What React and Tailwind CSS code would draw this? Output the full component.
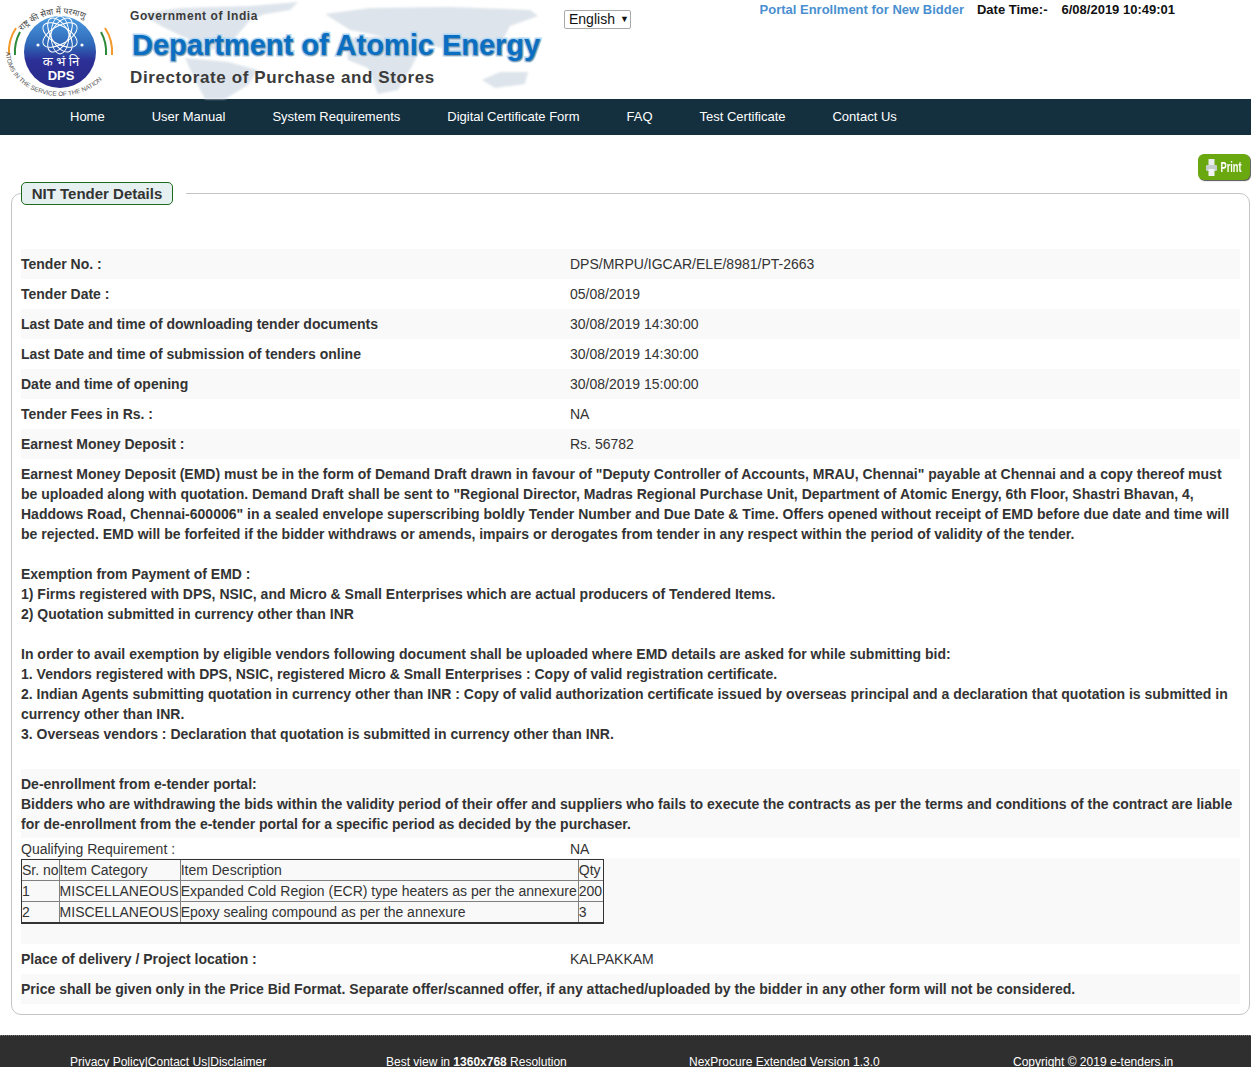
import React from 'react';

const NAV = ['Home', 'User Manual', 'System Requirements', 'Digital Certificate Form', 'FAQ', 'Test Certificate', 'Contact Us'];

const DETAILS = [
  ['Tender No. :', 'DPS/MRPU/IGCAR/ELE/8981/PT-2663'],
  ['Tender Date :', '05/08/2019'],
  ['Last Date and time of downloading tender documents', '30/08/2019 14:30:00'],
  ['Last Date and time of submission of tenders online', '30/08/2019 14:30:00'],
  ['Date and time of opening', '30/08/2019 15:00:00'],
  ['Tender Fees in Rs. :', 'NA'],
  ['Earnest Money Deposit :', 'Rs. 56782'],
];

const Logo = () => (
  <svg width="120" height="99" viewBox="0 0 120 99" className="shrink-0">
    <defs>
      <linearGradient id="globe" x1="0" y1="0" x2="0" y2="1">
        <stop offset="0" stopColor="#4a9be0" />
        <stop offset="0.4" stopColor="#2f68b8" />
        <stop offset="0.62" stopColor="#2c2f96" />
        <stop offset="1" stopColor="#2a2a8a" />
      </linearGradient>
      <path id="topArc" d="M22 31 A54 54 0 0 1 101 31" />
      <path id="botArc" d="M6 52 A54 44 0 0 0 114 52" />
    </defs>
    <circle cx="60" cy="52" r="36" fill="url(#globe)" />
    <g fill="none" stroke="#fff" strokeWidth="1">
      <ellipse cx="60" cy="35" rx="9" ry="19" />
      <ellipse cx="60" cy="35" rx="9" ry="19" transform="rotate(60 60 35)" />
      <ellipse cx="60" cy="35" rx="9" ry="19" transform="rotate(-60 60 35)" />
      <ellipse cx="60" cy="35" rx="9" ry="19" transform="rotate(30 60 35)" />
      <ellipse cx="60" cy="35" rx="9" ry="19" transform="rotate(-30 60 35)" />
    </g>
    <circle cx="38" cy="45" r="1.6" fill="#fff" />
    <circle cx="82" cy="45" r="1.6" fill="#fff" />
    <text x="61" y="66" textAnchor="middle" fill="#fff" fontSize="13" fontFamily="'Noto Sans','Liberation Sans',sans-serif">क भं नि</text>
    <text x="61" y="80" textAnchor="middle" fill="#fff" fontSize="13" fontWeight="700" fontFamily="'Liberation Sans',sans-serif">DPS</text>
    <path d="M9 55 Q8 40 16 28" fill="none" stroke="#f39a2d" strokeWidth="2" />
    <path d="M12 55 Q11 41 18 30" fill="none" stroke="#fff" strokeWidth="1.5" />
    <path d="M15 55 Q14 43 20 32" fill="none" stroke="#2e8b3a" strokeWidth="2" />
    <path d="M112 55 Q113 40 105 28" fill="none" stroke="#f39a2d" strokeWidth="2" />
    <path d="M109 55 Q110 41 103 30" fill="none" stroke="#fff" strokeWidth="1.5" />
    <path d="M106 55 Q107 43 101 32" fill="none" stroke="#2e8b3a" strokeWidth="2" />
    <text fontSize="8.5" fill="#444" fontFamily="'Noto Sans','Liberation Serif',serif">
      <textPath href="#topArc">राष्ट्र की सेवा में परमाणु</textPath>
    </text>
    <text fontSize="6.3" fill="#555" fontFamily="'Liberation Sans',sans-serif">
      <textPath href="#botArc">ATOMS IN THE SERVICE OF THE NATION</textPath>
    </text>
  </svg>
);

// faint world map behind the heading
const WorldMap = () => (
  <svg width="560" height="99" viewBox="0 0 560 99" className="absolute left-0 top-0 blur-[1px]" fill="#dde4eb">
    <path d="M140 14 L180 8 L250 6 L298 2 L290 10 L265 14 L250 20 L240 32 L225 48 L205 50 L190 40 L165 28 Z" />
    <path d="M185 58 L228 62 L258 70 L248 85 L225 99 L205 99 L195 80 Z" />
    <path d="M325 14 L370 8 L450 7 L530 10 L538 16 L510 26 L500 45 L470 55 L450 50 L430 45 L400 40 L350 30 Z" />
    <path d="M345 38 L395 36 L420 50 L412 66 L398 90 L378 94 L368 68 L348 60 Z" />
    <path d="M482 80 L500 72 L528 72 L525 84 L495 88 Z" />
  </svg>
);

const Header = () => (
  <div className="relative flex h-[99px] bg-white">
    <WorldMap />
    <div className="relative">
      <Logo />
    </div>
    <div className="relative w-[444px] pl-[10px] text-[#3b3b3b]">
      <div className="mt-[8px] text-[12px] font-bold leading-[16px] tracking-[0.6px]">Government of India</div>
      <div className="mt-[2px] whitespace-nowrap pl-[2px] text-[29px] font-bold leading-[38px] text-[#0a6fc2] [-webkit-text-stroke:3px_#b4d8f4] [paint-order:stroke_fill] [text-shadow:1px_1px_1px_#8a9aa8]">
        Department of Atomic Energy
      </div>
      <div className="mt-[2px] whitespace-nowrap text-[17px] font-bold leading-[24px] tracking-[0.6px]">Directorate of Purchase and Stores</div>
    </div>
    <div className="relative mt-[10px] flex h-[19px] w-[67px] items-center rounded-[2px] border border-[#a9a9a9] pl-[4px] text-[14px] text-[#111]">
      English
      <span className="ml-[5px] text-[9px] leading-none">▼</span>
    </div>
    <div className="relative ml-auto mr-[76px] flex items-start pt-[1px] text-[13px] font-bold leading-[17px] whitespace-nowrap">
      <span className="text-[#4a8fd0]">Portal Enrollment for New Bidder</span>
      <span className="ml-[13px] text-[#111]">Date Time:-</span>
      <span className="ml-[14px] text-[#111]">6/08/2019 10:49:01</span>
    </div>
  </div>
);

const Row = ({ label, value, shaded }) => (
  <div className={`flex h-[30px] items-center ${shaded ? 'bg-[#f9f9f9]' : ''}`}>
    <div className="w-[549px] font-bold">{label}</div>
    <div>{value}</div>
  </div>
);

const ItemTable = () => (
  <table className="border-separate border-spacing-0 border border-b-2 border-[#333] text-[14px] leading-[20px]">
    <tbody>
      <tr>
        <td className="border-b border-r border-[#808080]">Sr. no</td>
        <td className="border-b border-r border-[#808080]">Item Category</td>
        <td className="border-b border-r border-[#808080]">Item Description</td>
        <td className="border-b border-[#808080]">Qty</td>
      </tr>
      <tr>
        <td className="border-b border-r border-[#808080]">1</td>
        <td className="border-b border-r border-[#808080] pr-[1px]">MISCELLANEOUS</td>
        <td className="border-b border-r border-[#808080] pr-[1px]">Expanded Cold Region (ECR) type heaters as per the annexure</td>
        <td className="border-b border-[#808080] pr-[1px]">200</td>
      </tr>
      <tr>
        <td className="border-r border-[#808080]">2</td>
        <td className="border-r border-[#808080]">MISCELLANEOUS</td>
        <td className="border-r border-[#808080]">Epoxy sealing compound as per the annexure</td>
        <td>3</td>
      </tr>
    </tbody>
  </table>
);

export default function App() {
  return (
    <div className="h-[1067px] overflow-hidden bg-white font-['Liberation_Sans',Arial,sans-serif] text-[14px] text-[#333]">
      <Header />

      <div className="flex h-[36px] items-center gap-[47px] bg-[#14303f] pb-[1px] pl-[70px] text-[13px] text-white">
        {NAV.map((item) => (
          <span key={item}>{item}</span>
        ))}
      </div>

      <div className="flex justify-end pr-[1px] pt-[19px]">
        <div className="flex h-[26px] w-[52px] items-center justify-center gap-[3px] rounded-[6px] bg-[#6aa80f] text-[14px] font-bold text-white shadow-[1px_1px_1px_#555]">
          <svg width="11" height="17" viewBox="0 0 11 17">
            <rect x="2.5" y="0" width="6" height="6" fill="#e8ecec" />
            <rect x="0" y="6" width="11" height="6" rx="1" fill="#c4cccc" />
            <rect x="2.5" y="10" width="6" height="7" fill="#f2f4f4" />
          </svg>
          <span className="flex w-[22px] scale-x-[0.66] justify-center whitespace-nowrap">Print</span>
        </div>
      </div>

      <fieldset className="ml-[11px] mr-[1px] mt-[2px] h-[833px] rounded-[10px] border border-[#c4c4c4] px-[9px]">
        <legend className="pr-[13px]">
          <span className="flex h-[23px] w-[152px] items-center justify-center rounded-[5px] border border-[#1c6b1c] bg-[#e6f0f0] pt-[1px] text-[15px] font-bold">
            NIT Tender Details
          </span>
        </legend>

        <div className="pt-[44px] leading-[20px]">
          {DETAILS.map(([label, value], i) => (
            <Row key={label} label={label} value={value} shaded={i % 2 === 0} />
          ))}

          <div className="pt-[5px] font-bold">
            <p>
              Earnest Money Deposit (EMD) must be in the form of Demand Draft drawn in favour of "Deputy Controller of Accounts, MRAU, Chennai" payable at Chennai and a copy thereof must be uploaded along with quotation. Demand Draft shall be sent to "Regional Director, Madras Regional Purchase Unit, Department of Atomic Energy, 6th Floor, Shastri Bhavan, 4, Haddows Road, Chennai-600006" in a sealed envelope superscribing boldly Tender Number and Due Date &amp; Time. Offers opened without receipt of EMD before due date and time will be rejected. EMD will be forfeited if the bidder withdraws or amends, impairs or derogates from tender in any respect within the period of validity of the tender.
            </p>
            <p className="mt-[20px]">
              Exemption from Payment of EMD :<br />
              1) Firms registered with DPS, NSIC, and Micro &amp; Small Enterprises which are actual producers of Tendered Items.<br />
              2) Quotation submitted in currency other than INR
            </p>
            <p className="mt-[20px]">
              In order to avail exemption by eligible vendors following document shall be uploaded where EMD details are asked for while submitting bid:<br />
              1. Vendors registered with DPS, NSIC, registered Micro &amp; Small Enterprises : Copy of valid registration certificate.<br />
              2. Indian Agents submitting quotation in currency other than INR : Copy of valid authorization certificate issued by overseas principal and a declaration that quotation is submitted in currency other than INR.<br />
              3. Overseas vendors : Declaration that quotation is submitted in currency other than INR.
            </p>
          </div>

          <div className="mt-[25px] bg-[#f9f9f9] pb-[4px] pt-[5px] font-bold">
            De-enrollment from e-tender portal:<br />
            Bidders who are withdrawing the bids within the validity period of their offer and suppliers who fails to execute the contracts as per the terms and conditions of the contract are liable for de-enrollment from the e-tender portal for a specific period as decided by the purchaser.
          </div>

          <div className="flex h-[20px] items-center pt-[2px]">
            <div className="w-[549px]">Qualifying Requirement :</div>
            <div>NA</div>
          </div>

          <div className="h-[86px] bg-[#f9f9f9] pt-[1px]">
            <ItemTable />
          </div>

          <Row label="Place of delivery / Project location :" value="KALPAKKAM" />
          <div className="flex h-[30px] items-center bg-[#f9f9f9] font-bold">
            Price shall be given only in the Price Bid Format. Separate offer/scanned offer, if any attached/uploaded by the bidder in any other form will not be considered.
          </div>
        </div>
      </fieldset>

      <div className="mt-[20px] flex h-[60px] border-t border-dotted border-[#777] bg-[#2f2f2f] pt-[19px] text-[12px] leading-[14px] text-white">
        <span className="ml-[70px] w-[316px]">Privacy Policy|Contact Us|Disclaimer</span>
        <span className="w-[303px]">Best view in <b>1360x768</b> Resolution</span>
        <span className="w-[324px]">NexProcure Extended Version 1.3.0</span>
        <span>Copyright © 2019 e-tenders.in</span>
      </div>
    </div>
  );
}
